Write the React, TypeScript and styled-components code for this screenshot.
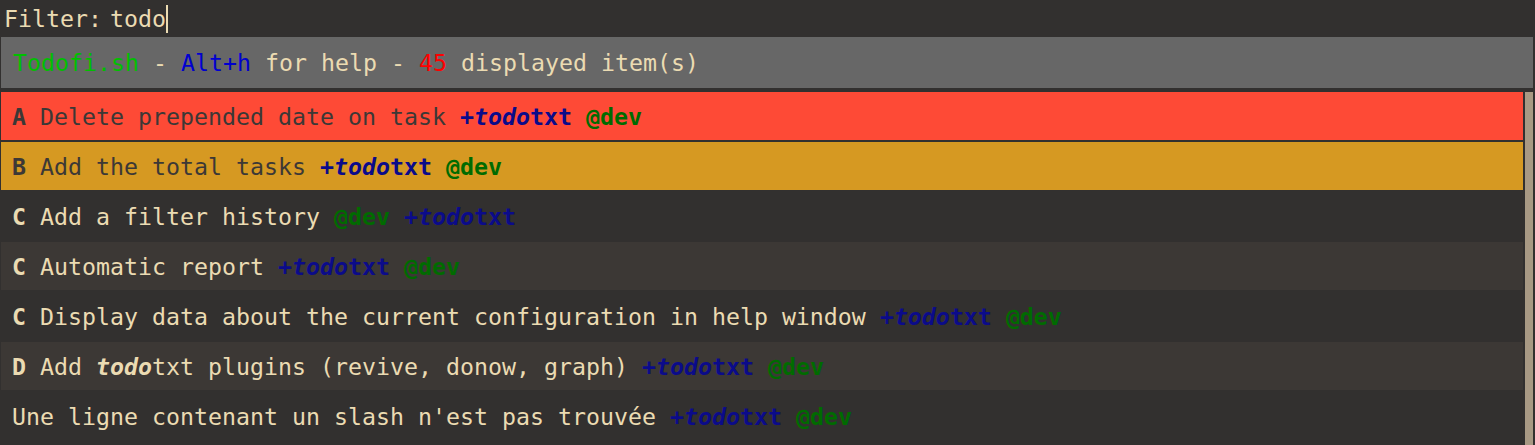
import React from 'react';
import styled, { createGlobalStyle } from 'styled-components';

type Tone = 'urgent' | 'active' | 'normal' | 'alt';

type Item = {
  tone: Tone;
  priority?: string;
  parts: Part[];
};

type Part =
  | { kind: 'text'; value: string }
  | { kind: 'match'; value: string }
  | { kind: 'project' }
  | { kind: 'context' };

const t = (value: string): Part => ({ kind: 'text', value });
const project: Part = { kind: 'project' };
const context: Part = { kind: 'context' };

const items: Item[] = [
  { tone: 'urgent', priority: 'A', parts: [t('Delete prepended date on task '), project, t(' '), context] },
  { tone: 'active', priority: 'B', parts: [t('Add the total tasks '), project, t(' '), context] },
  { tone: 'normal', priority: 'C', parts: [t('Add a filter history '), context, t(' '), project] },
  { tone: 'alt', priority: 'C', parts: [t('Automatic report '), project, t(' '), context] },
  {
    tone: 'normal',
    priority: 'C',
    parts: [t('Display data about the current configuration in help window '), project, t(' '), context],
  },
  {
    tone: 'alt',
    priority: 'D',
    parts: [t('Add '), { kind: 'match', value: 'todo' }, t('txt plugins (revive, donow, graph) '), project, t(' '), context],
  },
  { tone: 'normal', parts: [t("Une ligne contenant un slash n'est pas trouvée "), project, t(' '), context] },
];

const GlobalStyle = createGlobalStyle`
  html, body {
    margin: 0;
    padding: 0;
    background: #32302f;
    overflow: hidden;
  }
  body {
    font-family: "DejaVu Sans Mono", "Liberation Mono", monospace;
    font-size: 23.25px;
    color: #ebdbb2;
  }
`;

const Window = styled.div`
  width: 1535px;
  height: 445px;
  display: flex;
  flex-direction: column;
  background: #32302f;
`;

const InputBar = styled.div`
  height: 37px;
  display: flex;
  align-items: center;
  gap: 8px;
  padding-left: 4px;
  white-space: pre;
`;

const Entry = styled.span`
  display: flex;
  align-items: center;
`;

const Caret = styled.span`
  width: 2px;
  height: 28px;
  background: #ebdbb2;
`;

const Message = styled.div`
  margin: 0 2px 4px 1px;
  height: 51px;
  display: flex;
  align-items: center;
  padding-left: 12px;
  background: #676767;
  white-space: pre;
`;

const Hl = styled.span<{ $color: string }>`
  color: ${(p) => p.$color};
`;

const ListView = styled.div`
  flex: 1;
  display: flex;
  gap: 2px;
  padding: 0 2px 0 1px;
  min-height: 0;
`;

const Rows = styled.div`
  flex: 1;
  display: flex;
  flex-direction: column;
  gap: 2px;
`;

const toneBg: Record<Tone, string> = {
  urgent: '#fe4a36',
  active: '#d69922',
  normal: '#32302f',
  alt: '#3c3835',
};

const Row = styled.div<{ $tone: Tone }>`
  height: 48px;
  flex: none;
  display: flex;
  align-items: center;
  padding-left: 11px;
  white-space: pre;
  background: ${(p) => toneBg[p.$tone]};
  color: ${(p) => (p.$tone === 'urgent' || p.$tone === 'active' ? '#3c3836' : '#ebdbb2')};
`;

const Priority = styled.b`
  font-weight: bold;
`;

const Match = styled.span`
  font-weight: bold;
  font-style: italic;
`;

const Tag = styled.span<{ $color: string }>`
  font-weight: bold;
  color: ${(p) => p.$color};
`;

const Scrollbar = styled.div`
  width: 8px;
  background: #a89984;
`;

const renderPart = (part: Part, i: number) => {
  switch (part.kind) {
    case 'text':
      return <span key={i}>{part.value}</span>;
    case 'match':
      return <Match key={i}>{part.value}</Match>;
    case 'project':
      return (
        <Tag key={i} $color="#0b0b8a">
          +<Match>todo</Match>txt
        </Tag>
      );
    case 'context':
      return (
        <Tag key={i} $color="#006b00">
          @dev
        </Tag>
      );
  }
};

const App = () => (
  <>
    <GlobalStyle />
    <Window>
      <InputBar>
        <span>Filter:</span>
        <Entry>
          todo
          <Caret />
        </Entry>
      </InputBar>
      <Message>
        <Hl $color="#00c000">Todofi.sh</Hl> - <Hl $color="#0000d0">Alt+h</Hl> for help -{' '}
        <Hl $color="#ff0000">45</Hl> displayed item(s)
      </Message>
      <ListView>
        <Rows>
          {items.map((item, idx) => (
            <Row key={idx} $tone={item.tone}>
              {item.priority && <Priority>{item.priority} </Priority>}
              {item.parts.map(renderPart)}
            </Row>
          ))}
        </Rows>
        <Scrollbar />
      </ListView>
    </Window>
  </>
);

export default App;
